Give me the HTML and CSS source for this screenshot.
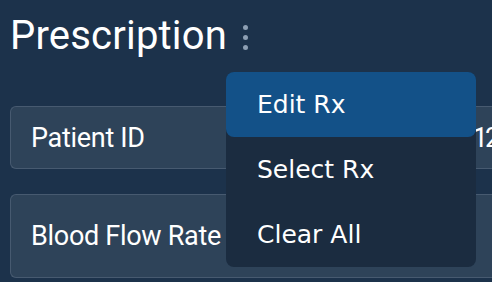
FILE: index.html
```html
<!DOCTYPE html>
<html lang="en">

<head>
    <meta charset="UTF-8">
    <meta name="viewport" content="width=device-width, initial-scale=1.0">
    <title>Prescription</title>
    <link rel="stylesheet" href="styles.css">
</head>

<body>
    <div class="header">
        <h1>Prescription</h1>
        <div class="kebab">
            <span></span>
            <span></span>
            <span></span>
        </div>
        <ul class="menu">
            <li class="active">Edit Rx</li>
            <li>Select Rx</li>
            <li>Clear All</li>
        </ul>
    </div>

    <div class="fields">
        <div class="field field-short">
            <span class="label">Patient ID</span>
            <span class="value">12</span>
        </div>
        <div class="field field-tall">
            <span class="label">Blood Flow Rate</span>
        </div>
    </div>
</body>

</html>
```

FILE: styles.css
```css
html,
body {
    margin: 0;
    overflow: hidden;
}

body {
    background-color: #1c324b;
    color: #ffffff;
    font-family: Roboto, "Noto Sans", sans-serif;
    width: 492px;
    height: 282px;
}

.header {
    position: relative;
    display: flex;
    align-items: center;
    padding: 12px 10px 0;
    height: 46px;
}

h1 {
    margin: 0;
    font-size: 40px;
    font-weight: 400;
    letter-spacing: 0.2px;
}

.kebab {
    display: flex;
    flex-direction: column;
    gap: 5px;
    margin-left: 16px;
    margin-top: 4px;
}

.kebab span {
    width: 5px;
    height: 5px;
    border-radius: 50%;
    background-color: #8d9fb3;
}

.menu {
    position: absolute;
    left: 226px;
    top: 72px;
    width: 250px;
    margin: 0;
    padding: 0;
    list-style: none;
    background-color: #1b2c40;
    border-radius: 8px;
    z-index: 2;
    font-family: "DejaVu Sans", sans-serif;
    font-size: 25px;
}

.menu li {
    height: 65px;
    line-height: 65px;
    padding-left: 31px;
}

.menu li.active {
    background-color: #135188;
    border-radius: 8px;
}

.fields {
    display: flex;
    flex-direction: column;
    gap: 25px;
    padding: 48px 0 0 10px;
}

.field {
    display: flex;
    align-items: center;
    background-color: #2e4359;
    border: 1px solid #475a70;
    border-right: none;
    border-radius: 6px 0 0 6px;
    padding-left: 20px;
    font-size: 27px;
    white-space: nowrap;
}

.field .label {
    letter-spacing: -0.3px;
}

.field-short {
    height: 61px;
}

.field-tall {
    height: 82px;
}

.value {
    margin-left: 328px;
    letter-spacing: -3px;
}
```
